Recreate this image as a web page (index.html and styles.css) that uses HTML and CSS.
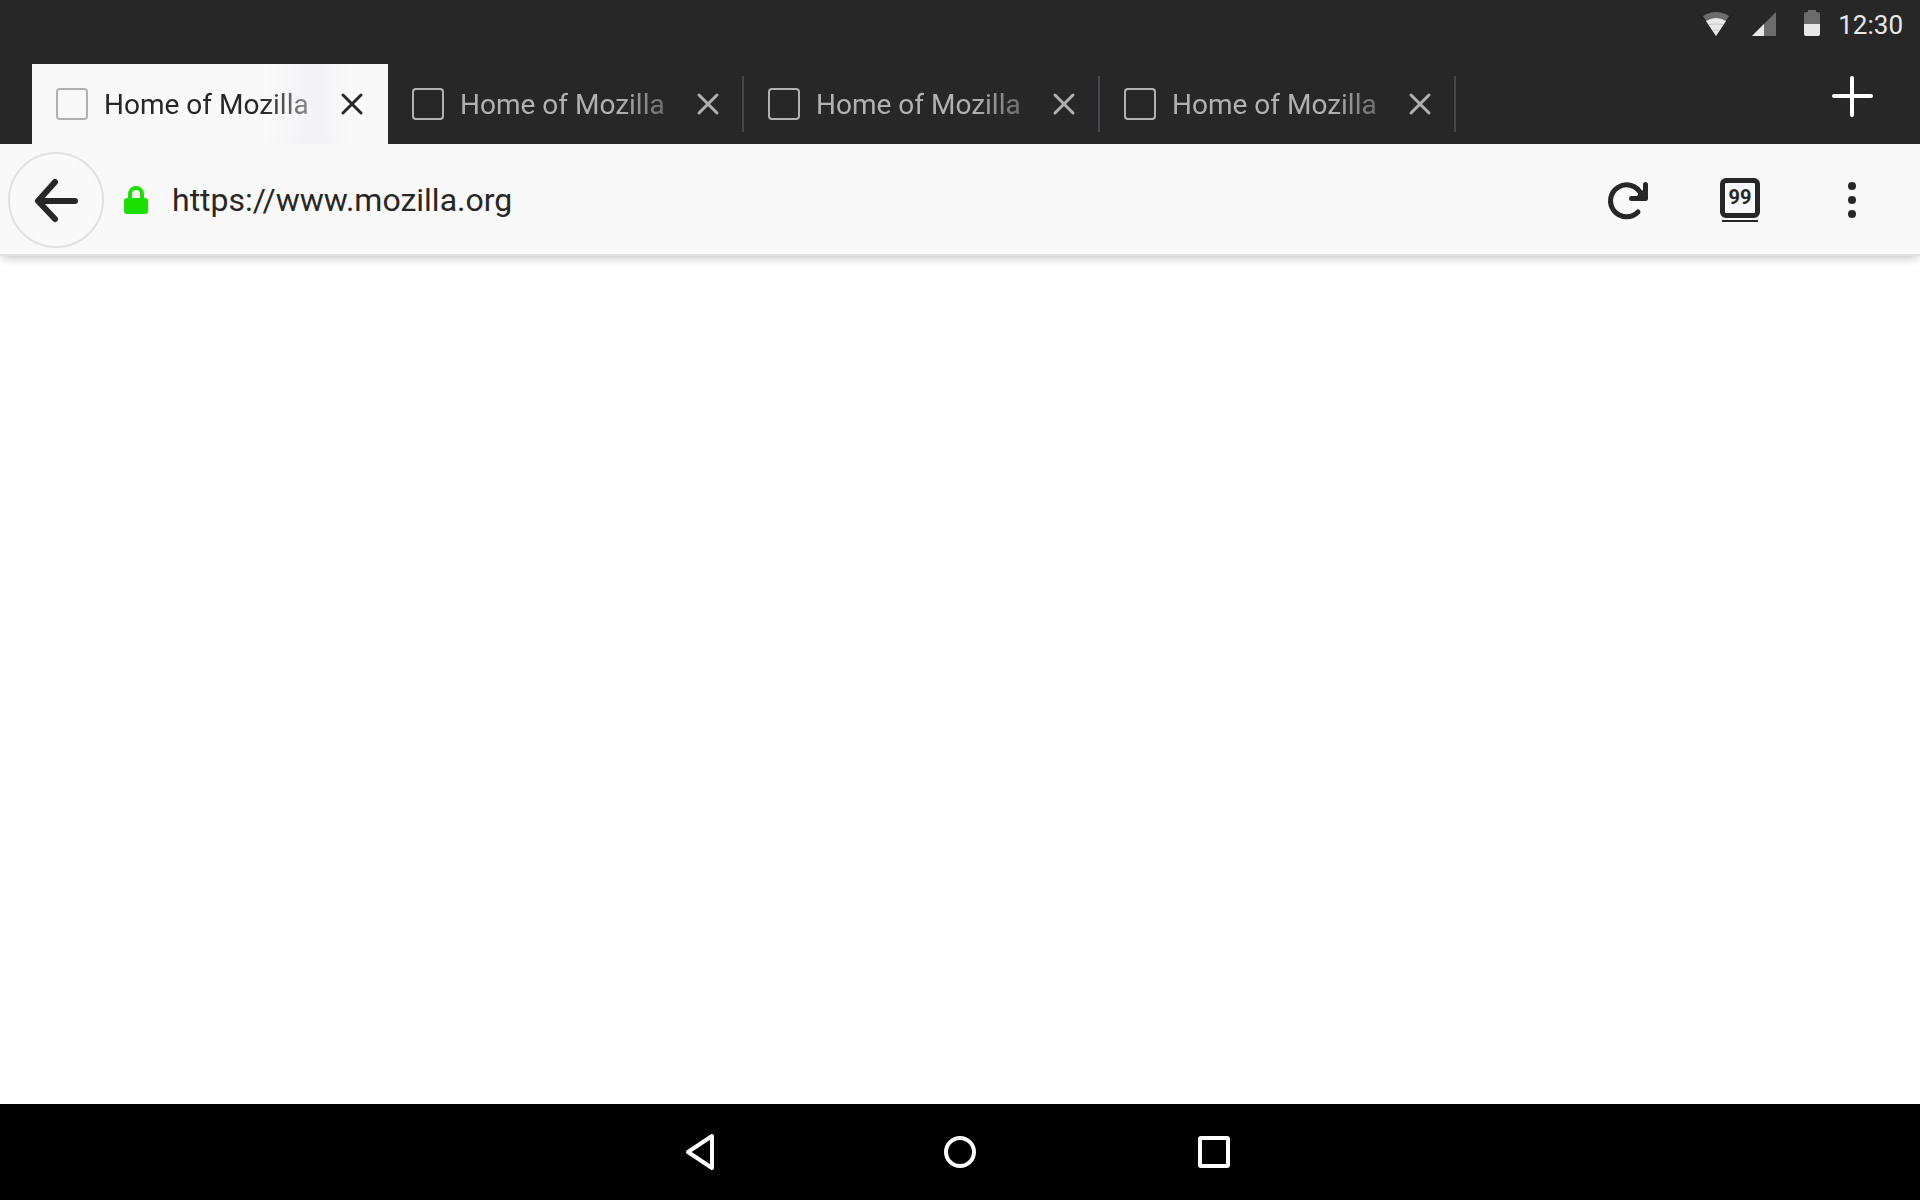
FILE: index.html
```html
<!DOCTYPE html>
<html lang="en">
<head>
<meta charset="utf-8">
<title>Home of Mozilla</title>
<link rel="stylesheet" href="styles.css">
</head>
<body>
<header class="chrome">
  <div class="status">
    <svg width="26" height="24" viewBox="0 0 26 24" aria-hidden="true"><path fill="#6c6c6c" d="M0 4Q13-4 26 4L13 24z"/><path fill="#e8e8e8" d="M3 9Q13 3 23 9L13 24z"/><path fill="none" stroke="#c8c8c8" d="M6 12.500Q13 11.500 20 12.500M9 18.500Q13 17.500 17 18.500"/></svg>
    <svg width="24" height="24" viewBox="0 0 24 24" aria-hidden="true"><path fill="#6c6c6c" d="M24 0V24H0z"/><path fill="#e8e8e8" d="M12 12V24H0z"/></svg>
    <svg class="battery" width="16" height="26" viewBox="0 0 16 26" aria-hidden="true"><path fill="#6c6c6c" d="M4 0H12V2H14Q16 2 16 4V14H0V4Q0 2 2 2H4z"/><path fill="#e8e8e8" d="M0 14H16V24Q16 26 14 26H2Q0 26 0 24z"/></svg>
    <time>12:30</time>
  </div>
  <div class="tabs">
    <div class="tab active"><button class="title"><span class="favicon"></span><span class="label">Home of Mozilla</span></button><button class="close" aria-label="Close tab"><svg width="22" height="22" viewBox="0 0 22 22"><path d="M2 2L20 20M20 2L2 20"/></svg></button></div>
    <div class="tab"><button class="title"><span class="favicon"></span><span class="label">Home of Mozilla</span></button><button class="close" aria-label="Close tab"><svg width="22" height="22" viewBox="0 0 22 22"><path d="M2 2L20 20M20 2L2 20"/></svg></button></div>
    <div class="tab"><button class="title"><span class="favicon"></span><span class="label">Home of Mozilla</span></button><button class="close" aria-label="Close tab"><svg width="22" height="22" viewBox="0 0 22 22"><path d="M2 2L20 20M20 2L2 20"/></svg></button></div>
    <div class="tab"><button class="title"><span class="favicon"></span><span class="label">Home of Mozilla</span></button><button class="close" aria-label="Close tab"><svg width="22" height="22" viewBox="0 0 22 22"><path d="M2 2L20 20M20 2L2 20"/></svg></button></div>
    <button class="new-tab" aria-label="New tab"><svg width="42" height="42" viewBox="0 0 42 42"><path d="M21 3V40M3 21H40" stroke="#fff" stroke-width="4" stroke-linecap="round"/></svg></button>
  </div>
</header>
<div class="toolbar">
  <button class="back" aria-label="Back"><svg width="48" height="48" viewBox="0 0 48 48" fill="none" stroke="#272727" stroke-linecap="round" stroke-linejoin="round"><path stroke-width="6" d="M7 25H43M23 6L6 25L23 43"/></svg></button>
  <svg class="lock" width="24" height="28" viewBox="0 0 24 28" aria-hidden="true"><rect y="12" width="24" height="16" rx="3" fill="#1be000"/><path d="M6 14V8A6 6 0 0 1 18 8V14" fill="none" stroke="#1be000" stroke-width="4"/></svg>
  <input class="url" type="text" aria-label="Address" value="https://www.mozilla.org">
  <button class="tool" aria-label="Reload"><svg width="44" height="44" viewBox="2 0 44 44" fill="none" stroke="#272727" stroke-width="5" stroke-linecap="round" stroke-linejoin="round"><path d="M34 34A16 16 0 1 1 37 16"/><path d="M27.500 20.500H41.500V6.500"/><path fill="#272727" stroke="none" d="M35 14L41 11V21H32z"/></svg></button>
  <button class="tool" aria-label="Tabs"><span class="count">99</span></button>
  <button class="tool" aria-label="Menu"><svg width="8" height="36" viewBox="0 0 8 36" fill="#272727"><circle cx="4" cy="4" r="4"/><circle cx="4" cy="18" r="4"/><circle cx="4" cy="32" r="4"/></svg></button>
</div>
<main class="page"></main>
<nav class="system" aria-label="System">
  <button aria-label="Back"><svg width="40" height="40" viewBox="0 0 40 40"><path d="M26 4V36L2 20z"/></svg></button>
  <button aria-label="Home"><svg width="40" height="40" viewBox="0 0 40 40"><circle cx="20" cy="20" r="14"/></svg></button>
  <button aria-label="Overview"><svg width="40" height="40" viewBox="0 0 40 40"><rect x="6" y="6" width="28" height="28" rx="1"/></svg></button>
</nav>
</body>
</html>
```
FILE: styles.css
```css
* { box-sizing: border-box; }
body {
  margin: 0;
  min-height: 100vh;
  display: flex;
  flex-direction: column;
  background: #fff;
  color: #272727;
  font-family: Roboto, "Liberation Sans", sans-serif;
}
button {
  display: flex;
  align-items: center;
  justify-content: center;
  margin: 0;
  padding: 0;
  border: 0;
  background: none;
  color: inherit;
  font: inherit;
}
svg { display: block; flex: none; overflow: visible; }

.chrome { background: #272727; }
.status {
  display: flex;
  align-items: center;
  justify-content: flex-end;
  height: 48px;
  padding-right: 17px;
  color: #e8e8e8;
  font-size: 26px;
  line-height: 48px;
}
.status svg + svg { margin-left: 23px; }
.status .battery { margin: 0 18px 2px 28px; }
.status time { padding-top: 2px; }

.tabs { display: flex; padding: 16px 32px 0; }
.tab {
  position: relative;
  display: flex;
  width: 356px;
  height: 80px;
  color: #b1b1b1;
}
.tab:not(.active)::after {
  content: "";
  position: absolute;
  top: 12px;
  right: 0;
  width: 2px;
  height: 56px;
  background: #46464b;
}
.tab.active {
  background: linear-gradient(90deg, #f9f9f9 232px, #f4f4f6 272px, #f4f4f6 290px, #f9f9f9 324px);
  color: #272727;
}
.title { flex: 1; justify-content: flex-start; gap: 16px; padding-left: 24px; min-width: 0; }
.favicon { flex: none; width: 32px; height: 32px; border: 2px solid #b1b1b1; border-radius: 4px; }
.label {
  flex: 1;
  overflow: hidden;
  padding-top: 2px;
  white-space: nowrap;
  text-align: left;
  font-size: 28px;
  line-height: 40px;
  -webkit-mask-image: linear-gradient(90deg, #000 160px, transparent 250px);
  mask-image: linear-gradient(90deg, #000 160px, transparent 250px);
}
.close { width: 72px; }
.close svg { stroke: currentColor; stroke-width: 3; stroke-linecap: round; }
.new-tab { width: 72px; height: 64px; margin-left: auto; }

.toolbar {
  position: relative;
  display: flex;
  align-items: center;
  height: 112px;
  padding: 2px 12px 0 8px;
  background: #f9f9f9;
  border-bottom: 2px solid #e1e1e1;
  box-shadow: 0 5px 8px -2px rgba(0, 0, 0, .2);
}
.back { width: 96px; height: 96px; border: 2px solid #e1e1e1; border-radius: 50%; }
.lock { margin: 0 24px 0 20px; }
.url {
  flex: 1;
  min-width: 0;
  height: 64px;
  padding: 0;
  border: 0;
  outline: 0;
  background: none;
  color: #272727;
  font: 32px/64px Roboto, "Liberation Sans", sans-serif;
}
.tool { width: 112px; height: 96px; }
.count {
  position: relative;
  width: 40px;
  height: 40px;
  margin-bottom: 4px;
  border: 5px solid #272727;
  border-radius: 6px;
  font: bold 20px/28px Roboto, sans-serif;
}
.count::after {
  content: "";
  position: absolute;
  left: -3px;
  right: -3px;
  bottom: -9px;
  height: 2px;
  background: #272727;
}

.page { flex: 1; }
.system {
  display: flex;
  justify-content: center;
  gap: 158px;
  height: 96px;
  background: #000;
}
.system button { width: 96px; }
.system svg { fill: none; stroke: #fff; stroke-width: 4; stroke-linejoin: round; }
```
